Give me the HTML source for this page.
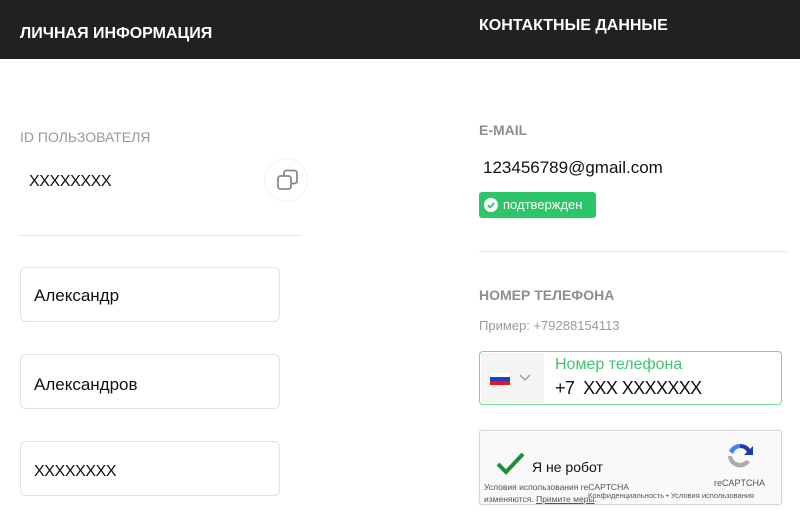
<!DOCTYPE html>
<html><head><meta charset="utf-8"><style>
*{margin:0;padding:0;box-sizing:border-box}
body{width:800px;height:511px;overflow:hidden;background:#fff;font-family:"Liberation Sans",sans-serif;position:relative}
.hdr{position:absolute;left:0;top:0;width:800px;height:59px;background:#212121}
.ht{position:absolute;color:#fff;font-weight:bold;font-size:16px}
.a{position:absolute}
.lbl{color:#9a9a9a;font-size:14px}
.box{position:absolute;left:20px;width:260px;height:55px;border:1px solid #e2e2e2;border-radius:6px;font-size:17px;color:#111;padding-left:13px}
.xs{font-size:16px;letter-spacing:-0.4px}
</style></head><body>
<div class="hdr"></div>
<div class="ht" style="left:20px;top:25px">ЛИЧНАЯ ИНФОРМАЦИЯ</div>
<div class="ht" style="left:479px;top:17px">КОНТАКТНЫЕ ДАННЫЕ</div>

<div class="a lbl" style="left:20px;top:129px">ID ПОЛЬЗОВАТЕЛЯ</div>
<div class="a xs" style="left:29px;top:173px;color:#111">XXXXXXXX</div>
<div class="a" style="left:264px;top:158px;width:44px;height:44px;border-radius:50%;border:1px solid #f0f0f0"></div>
<svg class="a" style="left:276px;top:168px" width="24" height="24" viewBox="0 0 24 24" fill="none" stroke="#888" stroke-width="1.8"><rect x="2" y="8" width="13" height="13" rx="2.5"/><path d="M8 8V5a2.5 2.5 0 0 1 2.5-2.5h8A2.5 2.5 0 0 1 21 5v8a2.5 2.5 0 0 1-2.5 2.5H15"/></svg>
<div class="a" style="left:20px;top:235px;width:280px;height:1px;background:#e6e6e6"></div>

<div class="box" style="top:267px;line-height:55px">Александр</div>
<div class="box" style="top:354px;line-height:60px">Александров</div>
<div class="box xs" style="top:441px;line-height:60px">XXXXXXXX</div>

<div class="a" style="left:479px;top:122px;font-weight:bold;font-size:14px;color:#8e8e8e">E-MAIL</div>
<div class="a" style="left:483px;top:158px;font-size:17px;color:#111">123456789@gmail.com</div>
<div class="a" style="left:479px;top:192px;width:117px;height:26px;background:#2cc56a;border-radius:3px;color:#fff;font-size:13px;line-height:26px;padding-left:24px">подтвержден</div>
<svg class="a" style="left:484px;top:198px" width="14" height="14" viewBox="0 0 14 14"><circle cx="7" cy="7" r="7" fill="#fff"/><path d="M3.8 7.2l2.2 2.2 4.2-4.4" stroke="#2cc56a" stroke-width="1.8" fill="none"/></svg>
<div class="a" style="left:479px;top:251px;width:308px;height:1px;background:#e6e6e6"></div>

<div class="a" style="left:479px;top:287px;font-weight:bold;font-size:14px;color:#8e8e8e">НОМЕР ТЕЛЕФОНА</div>
<div class="a lbl" style="left:479px;top:318px;font-size:13px">Пример: +79288154113</div>
<div class="a" style="left:479px;top:351px;width:303px;height:54px;border:1px solid #6fdc95;border-radius:4px"></div>
<div class="a" style="left:481px;top:353px;width:63px;height:50px;background:#f4f4f4"></div>
<div class="a" style="left:490px;top:373px;width:20px;height:4px;background:#fff"></div>
<div class="a" style="left:490px;top:377px;width:20px;height:4px;background:#1c3fd0"></div>
<div class="a" style="left:490px;top:381px;width:20px;height:4px;background:#e11"></div>
<svg class="a" style="left:519px;top:374px" width="12" height="8"><path d="M1 1l5 5 5-5" stroke="#999" stroke-width="1.3" fill="none"/></svg>
<div class="a" style="left:555px;top:356px;font-size:16px;color:#3cc76c">Номер телефона</div>
<div class="a" style="left:555px;top:378px;font-size:18px;color:#111;letter-spacing:-0.6px">+7&nbsp; XXX XXXXXXX</div>

<div class="a" style="left:479px;top:430px;width:303px;height:75px;border:1px solid #d6d6d6;border-radius:3px;background:#f9f9f9;box-shadow:0 0 3px rgba(0,0,0,.08)"></div>
<svg class="a" style="left:496px;top:452px" width="30" height="24"><path d="M2 12l8 8L27 2" stroke="#1e8e3e" stroke-width="4" fill="none"/></svg>
<div class="a" style="left:532px;top:459px;font-size:14px;color:#111">Я не робот</div>
<div class="a" style="left:484px;top:481px;font-size:8.5px;color:#555;line-height:12px">Условия использования reCAPTCHA<br>изменяются. <u>Примите меры</u>.</div>
<div class="a" style="left:588px;top:491px;font-size:7.5px;color:#555">Конфиденциальность • Условия использования</div>
<div class="a" style="left:714px;top:478px;font-size:9px;color:#555">reCAPTCHA</div>
<svg class="a" style="left:725px;top:441px" width="30" height="30" viewBox="0 0 30 30"><path d="M15 3a12 12 0 0 1 10 5l3-3v9h-9l3-3a8 8 0 0 0-7-4z" fill="#1c3aa9"/><path d="M15 3A12 12 0 0 0 4 10l4 3a8 8 0 0 1 7-6z" fill="#4285f4"/><path d="M3 15a12 12 0 0 0 22 6l-4-2a8 8 0 0 1-14-4H3z" fill="#ababab"/></svg>
</body></html>
